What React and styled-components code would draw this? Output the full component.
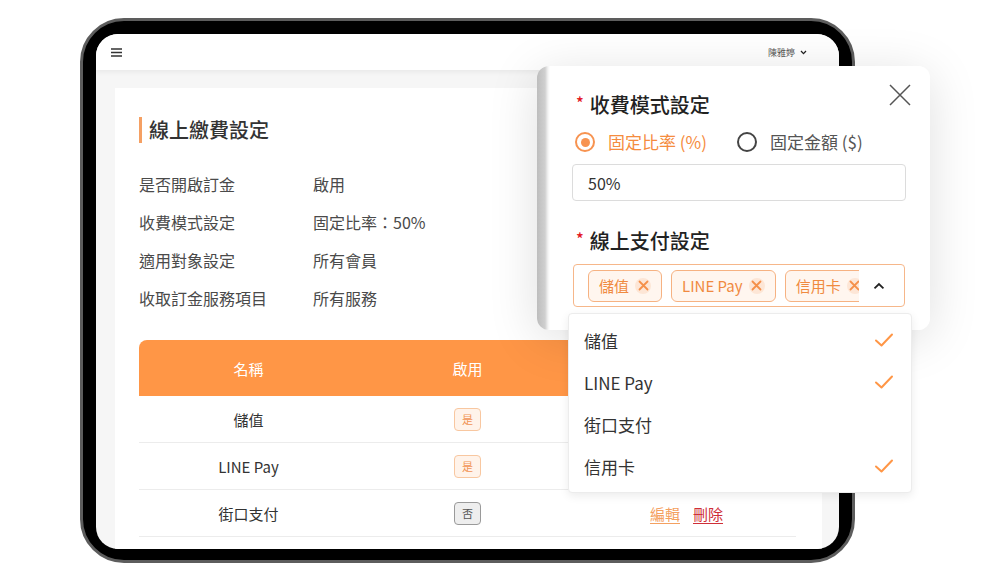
import React from "react";
import styled, { createGlobalStyle } from "styled-components";

const GlobalStyle = createGlobalStyle`
  html, body {
    margin: 0;
    padding: 0;
    background: #ffffff;
  }
  body {
    font-family: "Noto Sans CJK TC", "Noto Sans", sans-serif;
    color: #333;
  }
  * { box-sizing: border-box; }
`;

const ORANGE = "#ff9646";

const infoRows = [
  ["是否開啟訂金", "啟用"],
  ["收費模式設定", "固定比率：50%"],
  ["適用對象設定", "所有會員"],
  ["收取訂金服務項目", "所有服務"],
];

const payments = [
  { name: "儲值", enabled: true, actions: false },
  { name: "LINE Pay", enabled: true, actions: false },
  { name: "街口支付", enabled: false, actions: true },
];

const options = [
  { name: "儲值", checked: true },
  { name: "LINE Pay", checked: true },
  { name: "街口支付", checked: false },
  { name: "信用卡", checked: true },
];

function CheckIcon() {
  return (
    <svg width="20" height="16" viewBox="0 0 20 16" fill="none">
      <path d="M2 8.5 L7.5 13.5 L18 2.5" stroke={ORANGE} strokeWidth="2" strokeLinecap="round" strokeLinejoin="round" />
    </svg>
  );
}

function SmallX() {
  return (
    <svg width="11" height="11" viewBox="0 0 11 11" fill="none">
      <path d="M1.5 1.5 L9.5 9.5 M9.5 1.5 L1.5 9.5" stroke="#f5904a" strokeWidth="1.8" strokeLinecap="round" />
    </svg>
  );
}

export default function App() {
  return (
    <>
      <GlobalStyle />
      <Page>
        <Device>
          <Screen>
            <Header>
              <svg width="11" height="9" viewBox="0 0 11 9">
                <path d="M0 1 H11 M0 4.5 H11 M0 8 H11" stroke="#333" strokeWidth="1.3" />
              </svg>
              <User>
                陳雅婷
                <svg width="7" height="5" viewBox="0 0 7 5" fill="none">
                  <path d="M1 1 L3.5 3.6 L6 1" stroke="#222" strokeWidth="1.3" />
                </svg>
              </User>
            </Header>
            <Card>
              <Title>線上繳費設定</Title>
              <InfoList>
                {infoRows.map(([label, value]) => (
                  <InfoRow key={label}>
                    <InfoLabel>{label}</InfoLabel>
                    <span>{value}</span>
                  </InfoRow>
                ))}
              </InfoList>
              <Table>
                <HeadRow>
                  <Cell>名稱</Cell>
                  <Cell>啟用</Cell>
                  <Cell />
                </HeadRow>
                {payments.map((p) => (
                  <BodyRow key={p.name}>
                    <Cell>{p.name}</Cell>
                    <Cell>
                      <Badge $on={p.enabled}>{p.enabled ? "是" : "否"}</Badge>
                    </Cell>
                    <Cell>
                      {p.actions && (
                        <Actions>
                          <ActionLink $color="#f4a060">編輯</ActionLink>
                          <ActionLink $color="#cf2f38">刪除</ActionLink>
                        </Actions>
                      )}
                    </Cell>
                  </BodyRow>
                ))}
                <BodyRow />
              </Table>
            </Card>
          </Screen>
        </Device>

        <Popup>
          <CloseButton>
            <svg width="22" height="22" viewBox="0 0 22 22" fill="none">
              <path d="M1 1 L21 21 M21 1 L1 21" stroke="#555" strokeWidth="1.5" />
            </svg>
          </CloseButton>
          <SectionTitle>
            <Star>*</Star>收費模式設定
          </SectionTitle>
          <RadioGroup>
            <RadioOption $active>
              <RadioDot $active />
              固定比率 (%)
            </RadioOption>
            <RadioOption>
              <RadioDot />
              固定金額 ($)
            </RadioOption>
          </RadioGroup>
          <TextInput>50%</TextInput>
          <SectionTitle $spaced>
            <Star>*</Star>線上支付設定
          </SectionTitle>
          <SelectBox>
            <TagTrack>
              <Tag>儲值<TagClose><SmallX /></TagClose></Tag>
              <Tag>LINE Pay<TagClose><SmallX /></TagClose></Tag>
              <Tag>信用卡<TagClose><SmallX /></TagClose></Tag>
            </TagTrack>
            <svg width="12" height="8" viewBox="0 0 12 8" fill="none">
              <path d="M1.5 6.5 L6 2 L10.5 6.5" stroke="#222" strokeWidth="1.8" />
            </svg>
            <Dropdown>
              {options.map((o) => (
                <Option key={o.name}>
                  {o.name}
                  {o.checked && <CheckIcon />}
                </Option>
              ))}
            </Dropdown>
          </SelectBox>
        </Popup>
      </Page>
    </>
  );
}

const Page = styled.div`
  position: relative;
  width: 1000px;
  height: 584px;
  padding: 18px 0 0 80px;
  overflow: hidden;
  background: #fff;
`;

const Device = styled.div`
  width: 775px;
  height: 545px;
  border-radius: 44px;
  border: 3px solid #5d5d5d;
  background: #000;
  padding: 13px 13px 11px 13px;
`;

const Screen = styled.div`
  width: 100%;
  height: 100%;
  border-radius: 22px;
  overflow: hidden;
  background: #f6f6f6;
`;

const Header = styled.div`
  height: 36px;
  background: #fff;
  display: flex;
  align-items: center;
  justify-content: space-between;
  padding: 0 32px 0 15px;
  box-shadow: 0 2px 5px rgba(0, 0, 0, 0.06);
  position: relative;
`;

const User = styled.div`
  display: flex;
  align-items: center;
  gap: 5px;
  font-size: 9px;
  color: #555;
`;

const Card = styled.div`
  margin: 18px 0 0 19px;
  width: 707px;
  height: 480px;
  background: #fff;
  padding: 29px 26px 0 24px;
`;

const Title = styled.h2`
  margin: 0;
  border-left: 3px solid #f5a063;
  padding-left: 7px;
  height: 26px;
  line-height: 26px;
  font-size: 20px;
  font-weight: 500;
  color: #333;
`;

const InfoList = styled.div`
  margin-top: 30px;
  display: flex;
  flex-direction: column;
  gap: 16px;
`;

const InfoRow = styled.div`
  display: flex;
  font-size: 16px;
  line-height: 22px;
  color: #4a4a4a;
`;

const InfoLabel = styled.span`
  width: 174px;
`;

const Table = styled.div`
  margin-top: 31px;
  width: 657px;
`;

const HeadRow = styled.div`
  display: grid;
  grid-template-columns: repeat(3, 1fr);
  height: 56px;
  align-items: center;
  background: ${ORANGE};
  color: #fff;
  border-top-left-radius: 8px;
  font-size: 15px;
`;

const BodyRow = styled.div`
  display: grid;
  grid-template-columns: repeat(3, 1fr);
  height: 47px;
  align-items: center;
  border-bottom: 1px solid #ececec;
  font-size: 15px;
  color: #333;
`;

const Cell = styled.div`
  display: flex;
  justify-content: center;
  align-items: center;
`;

const Badge = styled.span`
  width: 27px;
  height: 23px;
  display: flex;
  align-items: center;
  justify-content: center;
  border-radius: 4px;
  font-size: 11px;
  border: 1px solid ${(p) => (p.$on ? "#f8c7a0" : "#9a9a9a")};
  background: ${(p) => (p.$on ? "#fff3ea" : "#eeeeee")};
  color: ${(p) => (p.$on ? "#f19455" : "#555")};
`;

const Actions = styled.div`
  display: flex;
  gap: 13px;
`;

const ActionLink = styled.span`
  color: ${(p) => p.$color};
  text-decoration: underline;
  text-underline-offset: 3px;
  font-size: 15px;
`;

const Popup = styled.div`
  position: absolute;
  left: 537px;
  top: 66px;
  width: 393px;
  height: 264px;
  border-radius: 12px;
  background: linear-gradient(to right, #bdbdbd 0, #cfcfcf 8px, #f3f3f3 11px, #fff 13px);
  box-shadow: 0 8px 50px rgba(0, 0, 0, 0.13);
  padding: 26px 24px 0 35px;
`;

const CloseButton = styled.div`
  position: absolute;
  top: 18px;
  right: 19px;
  width: 22px;
  height: 22px;
`;

const SectionTitle = styled.div`
  margin-top: ${(p) => (p.$spaced ? "27px" : "0")};
  padding-left: 4px;
  font-size: 20px;
  line-height: 26px;
  font-weight: 500;
  color: #222;
  display: flex;
  align-items: flex-start;
`;

const Star = styled.span`
  color: #e3191f;
  font-size: 16px;
  line-height: 20px;
  margin-right: 6px;
`;

const RadioGroup = styled.div`
  display: flex;
  gap: 30px;
  padding-left: 3px;
  margin-top: 12px;
`;

const RadioOption = styled.div`
  display: flex;
  align-items: center;
  gap: 13px;
  font-size: 17px;
  line-height: 24px;
  color: ${(p) => (p.$active ? "#f58c3e" : "#555")};
`;

const RadioDot = styled.span`
  width: 20px;
  height: 20px;
  border-radius: 50%;
  border: 2px solid ${(p) => (p.$active ? "#f79350" : "#444")};
  display: flex;
  align-items: center;
  justify-content: center;
  &::after {
    content: "";
    width: 9px;
    height: 9px;
    border-radius: 50%;
    background: ${(p) => (p.$active ? "#f79350" : "transparent")};
  }
`;

const TextInput = styled.div`
  margin-top: 10px;
  height: 37px;
  border: 1px solid #dcdcdc;
  border-radius: 4px;
  padding-left: 15px;
  display: flex;
  align-items: center;
  font-size: 16px;
  color: #333;
`;

const SelectBox = styled.div`
  position: relative;
  margin-top: 10px;
  margin-left: 1px;
  width: 332px;
  height: 43px;
  border: 1px solid #f6b78a;
  border-radius: 4px;
  display: flex;
  align-items: center;
  padding: 0 19px 0 14px;
  gap: 14px;
`;

const TagTrack = styled.div`
  width: 273px;
  overflow: hidden;
  display: flex;
  gap: 9px;
`;

const Tag = styled.span`
  flex-shrink: 0;
  height: 32px;
  display: flex;
  align-items: center;
  gap: 6px;
  padding: 0 10px 0 10px;
  border: 1px solid #f6b282;
  border-radius: 6px;
  background: #fff6ef;
  color: #f08a40;
  font-size: 15px;
`;

const TagClose = styled.span`
  width: 16px;
  height: 16px;
  border-radius: 50%;
  background: #fde6d6;
  display: flex;
  align-items: center;
  justify-content: center;
`;

const Dropdown = styled.div`
  position: absolute;
  left: -6px;
  top: 48px;
  width: 344px;
  height: 180px;
  background: #fff;
  border: 1px solid #ececec;
  border-radius: 4px;
  box-shadow: 0 3px 10px rgba(0, 0, 0, 0.08);
  padding: 5px 17px 0 15px;
  z-index: 2;
`;

const Option = styled.div`
  height: 42px;
  display: flex;
  align-items: center;
  justify-content: space-between;
  font-size: 17px;
  color: #333;
`;
